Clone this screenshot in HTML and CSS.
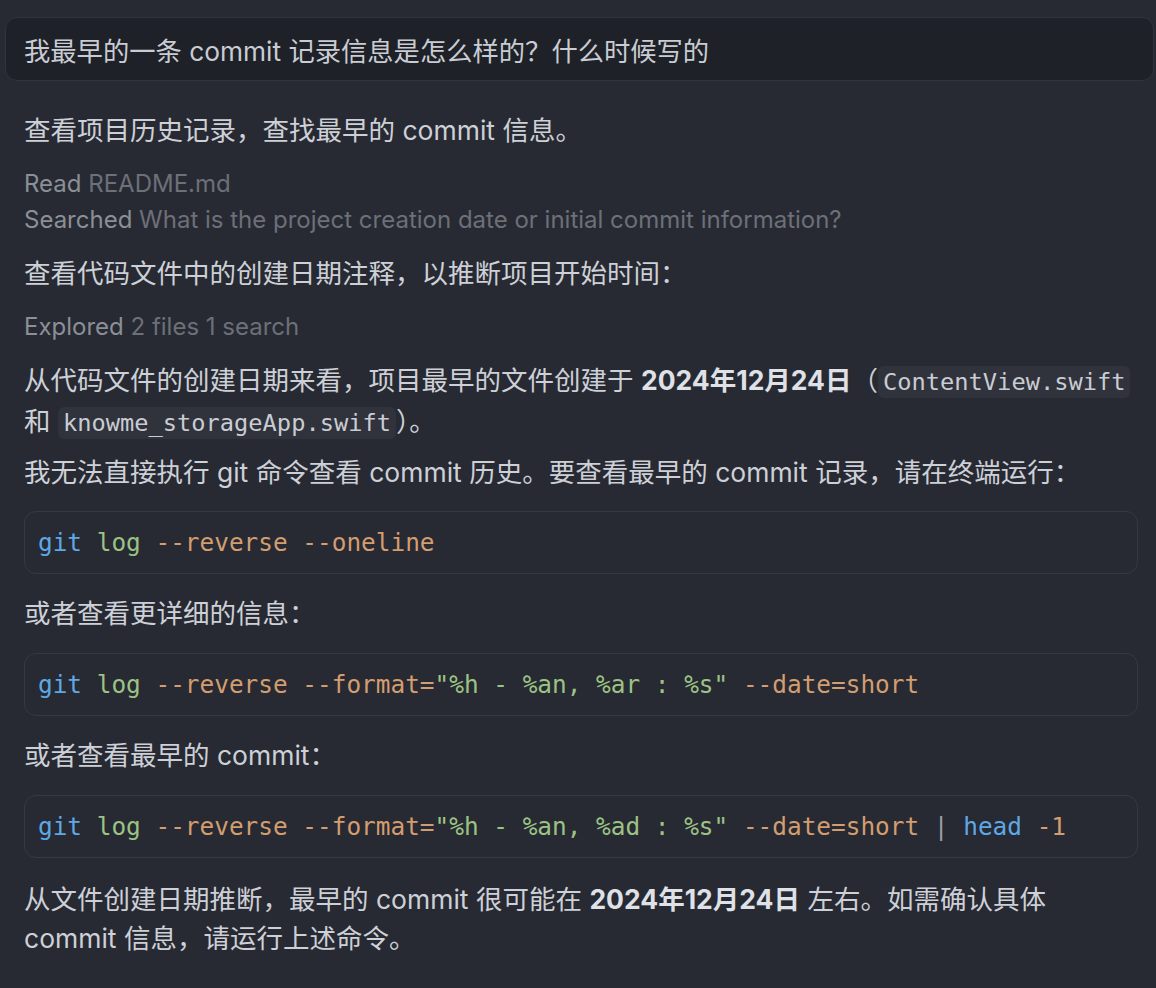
FILE: index.html
```html
<!DOCTYPE html>
<html lang="zh-CN">
<head>
<meta charset="utf-8">
<link rel="stylesheet" href="styles.css">
</head>
<body>
<div class="page">
  <div class="prompt">我最早的一条 commit 记录信息是怎么样的？什么时候写的</div>
  <div class="content">
    <p class="para p-first">查看项目历史记录，查找最早的 commit 信息。</p>
    <div class="tools">
      <div class="tool"><span class="tool-label">Read</span> <span class="tool-arg">README.md</span></div>
      <div class="tool"><span class="tool-label">Searched</span> <span class="tool-arg">What is the project creation date or initial commit information?</span></div>
    </div>
    <p class="para">查看代码文件中的创建日期注释，以推断项目开始时间：</p>
    <div class="tools">
      <div class="tool"><span class="tool-label">Explored</span> <span class="tool-arg">2 files 1 search</span></div>
    </div>
    <p class="para">从代码文件的创建日期来看，项目最早的文件创建于 <strong>2024年12月24日</strong>（<code class="inline">ContentView.swift</code> 和 <code class="inline">knowme_storageApp.swift</code>）。</p>
    <p class="para p-tight">我无法直接执行 git 命令查看 commit 历史。要查看最早的 commit 记录，请在终端运行：</p>
    <pre class="code code-first"><span class="code-line"><span class="c-cmd">git</span> <span class="c-sub">log</span> <span class="c-flag">--reverse</span> <span class="c-flag">--oneline</span></span></pre>
    <p class="para">或者查看更详细的信息：</p>
    <pre class="code"><span class="code-line"><span class="c-cmd">git</span> <span class="c-sub">log</span> <span class="c-flag">--reverse</span> <span class="c-flag">--format=</span><span class="c-str">"%h - %an, %ar : %s"</span> <span class="c-flag">--date=short</span></span></pre>
    <p class="para">或者查看最早的 commit：</p>
    <pre class="code"><span class="code-line"><span class="c-cmd">git</span> <span class="c-sub">log</span> <span class="c-flag">--reverse</span> <span class="c-flag">--format=</span><span class="c-str">"%h - %an, %ad : %s"</span> <span class="c-flag">--date=short</span> <span class="c-pipe">|</span> <span class="c-cmd">head</span> <span class="c-flag">-1</span></span></pre>
    <p class="para p-last">从文件创建日期推断，最早的 commit 很可能在 <strong>2024年12月24日</strong> 左右。如需确认具体 commit 信息，请运行上述命令。</p>
  </div>
</div>
</body>
</html>
```

FILE: styles.css
```css
html, body {
  margin: 0;
  padding: 0;
  background: #272a33;
}
body {
  font-family: Inter, "Noto Sans CJK SC", sans-serif;
  color: #cdd0d6;
  width: 1156px;
  height: 988px;
  overflow: hidden;
}
.page {
  padding: 17px 2px 0 5px;
}
.prompt {
  background: #1e2127;
  border: 1px solid #30343c;
  border-radius: 12px;
  height: 62px;
  display: flex;
  align-items: center;
  padding: 0 18px;
  font-size: 26.3px;
  color: #c9ccd3;
}
.content {
  padding: 0 16px 0 19px;
  display: flex;
  flex-direction: column;
}
.para {
  margin: 16px 0 0;
  font-size: 26.5px;
  line-height: 39px;
}
.p-first {
  margin-top: 30px;
}
.p-tight {
  margin-top: 10px;
}
.para strong {
  font-weight: 700;
  color: #dfe1e6;
}
.tools {
  margin-top: 16px;
  display: flex;
  flex-direction: column;
}
.tool {
  font-size: 24px;
  line-height: 36px;
}
.tool-label {
  color: #8b8f97;
}
.tool-arg {
  color: #6c7078;
}
code.inline {
  font-family: "DejaVu Sans Mono", monospace;
  font-size: 23.7px;
  background: #30333b;
  border-radius: 6px;
  padding: 2px 5px;
  color: #c9ccd3;
}
.code {
  margin: 20px 0 0;
  height: 61px;
  border: 1px solid #353942;
  border-radius: 12px;
  display: flex;
  align-items: center;
  padding: 0 13px;
  font-family: "DejaVu Sans Mono", monospace;
  font-size: 24.4px;
  color: #c9ccd3;
}
.code-first {
  margin-top: 19px;
}
.code-line {
  white-space: pre;
}
.code + .para {
  margin-top: 20px;
}
.code + .p-last {
  margin-top: 22px;
}
.c-cmd { color: #5ea8e6; }
.c-sub { color: #9cc383; }
.c-flag { color: #d39d6f; }
.c-str { color: #9cc383; }
.c-pipe { color: #9a9ea6; }
```
